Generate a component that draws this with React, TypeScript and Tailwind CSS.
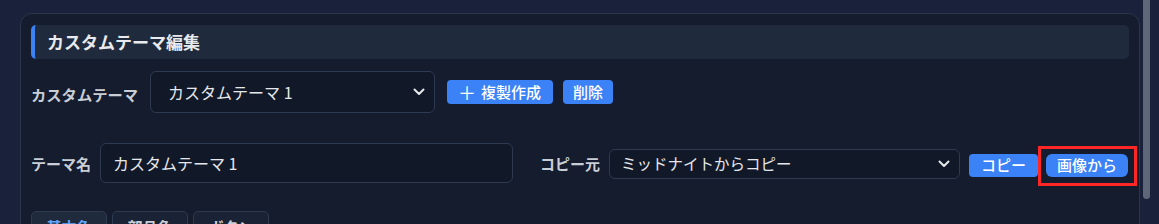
import React from "react";

const font = { fontFamily: '"Noto Sans CJK JP", "Noto Sans", sans-serif' };

function Chevron() {
  return (
    <svg width="12" height="8" viewBox="0 0 12 8" fill="none" className="shrink-0">
      <path d="M1.5 1.5 L6 6 L10.5 1.5" stroke="#e5e7eb" strokeWidth="2" strokeLinecap="round" strokeLinejoin="round" />
    </svg>
  );
}

export default function App() {
  return (
    <div className="flex h-[224px] w-[1159px] overflow-hidden bg-[#19223a]" style={font}>
      <div className="flex-1 pl-[20px] pt-[13px]">
        <div className="h-[240px] rounded-t-[12px] border border-[#2b364b] bg-[#141c2e] px-[10px] pt-[11px]">
          {/* Header */}
          <div className="flex h-[34px] items-center rounded-[5px] border-l-4 border-[#3b82f6] bg-[#1f2a3d] pl-[12px]">
            <span className="text-[17px] font-bold text-[#e8eaee]">カスタムテーマ編集</span>
          </div>

          {/* Row 1 */}
          <div className="mt-[12px] flex items-center">
            <span className="mt-[5px] text-[15.3px] font-bold text-[#c9ced6]">カスタムテーマ</span>
            <div className="ml-[12px] flex h-[42px] w-[285px] items-center justify-between rounded-[6px] border border-[#2e3a50] bg-[#111827] pl-[17px] pr-[9px]">
              <span className="text-[16px] text-[#e5e7eb]">カスタムテーマ 1</span>
              <Chevron />
            </div>
            <button className="ml-[12px] flex h-[24px] items-center rounded-[4px] bg-[#3b82f6] pl-[11px] pr-[12px] text-[15px] font-medium text-white">
              <span className="mr-[5px] text-[18px] font-normal leading-none">＋</span>複製作成
            </button>
            <button className="ml-[10px] flex h-[24px] items-center rounded-[4px] bg-[#3b82f6] px-[10px] text-[15px] font-medium text-white">
              削除
            </button>
          </div>

          {/* Row 2 */}
          <div className="mt-[30px] flex items-center">
            <div className="flex items-center">
              <span className="mt-[3px] text-[15px] font-bold text-[#c9ced6]">テーマ名</span>
              <input
                readOnly
                value="カスタムテーマ 1"
                className="ml-[9px] h-[40px] w-[413px] rounded-[6px] border border-[#2e3a50] bg-[#111827] px-[12px] text-[16px] text-[#e5e7eb] outline-none"
                style={font}
              />
            </div>
            <div className="ml-[27px] flex items-center">
              <span className="mt-[3px] text-[15px] font-bold text-[#c9ced6]">コピー元</span>
              <div className="ml-[9px] mt-[2px] flex h-[30px] w-[351px] items-center justify-between rounded-[6px] border border-[#2e3a50] bg-[#111827] pl-[11px] pr-[9px]">
                <span className="text-[15.5px] text-[#e5e7eb]">ミッドナイトからコピー</span>
                <Chevron />
              </div>
              <button className="ml-[9px] mt-[5px] flex h-[23px] items-center rounded-[4px] bg-[#3b82f6] px-[12px] text-[15px] font-medium text-white">
                コピー
              </button>
              <div className="relative ml-[8px] mt-[4px]">
                <button className="flex h-[23px] items-center rounded-[6px] bg-[#3b82f6] px-[11px] text-[15px] font-medium text-white">
                  画像から
                </button>
                <span className="pointer-events-none absolute -bottom-[9px] -left-[8px] -right-[9px] -top-[8px] border-[3px] border-[#ff2626]" />
              </div>
            </div>
          </div>

          {/* Tabs */}
          <div className="mt-[28px] flex gap-[5px]">
            <div className="flex h-[34px] w-[76px] justify-center rounded-t-[5px] border border-[#2e3a50] bg-[#1f2a3d] pt-[4px] text-[15px] font-bold text-[#60a5fa]">基本色</div>
            <div className="flex h-[34px] w-[76px] justify-center rounded-t-[5px] border border-[#2e3a50] bg-[#1a2335] pt-[4px] text-[15px] font-bold text-[#c9ced6]">部品色</div>
            <div className="flex h-[34px] w-[76px] justify-center rounded-t-[5px] border border-[#2e3a50] bg-[#1a2335] pt-[4px] text-[15px] font-bold text-[#c9ced6]">ボタン</div>
          </div>
        </div>
      </div>
      <div className="w-[19px] shrink-0">
        <div className="ml-[3px] h-[199px] w-[7px] rounded-b-[4px] bg-[#5e6778]" />
      </div>
    </div>
  );
}
